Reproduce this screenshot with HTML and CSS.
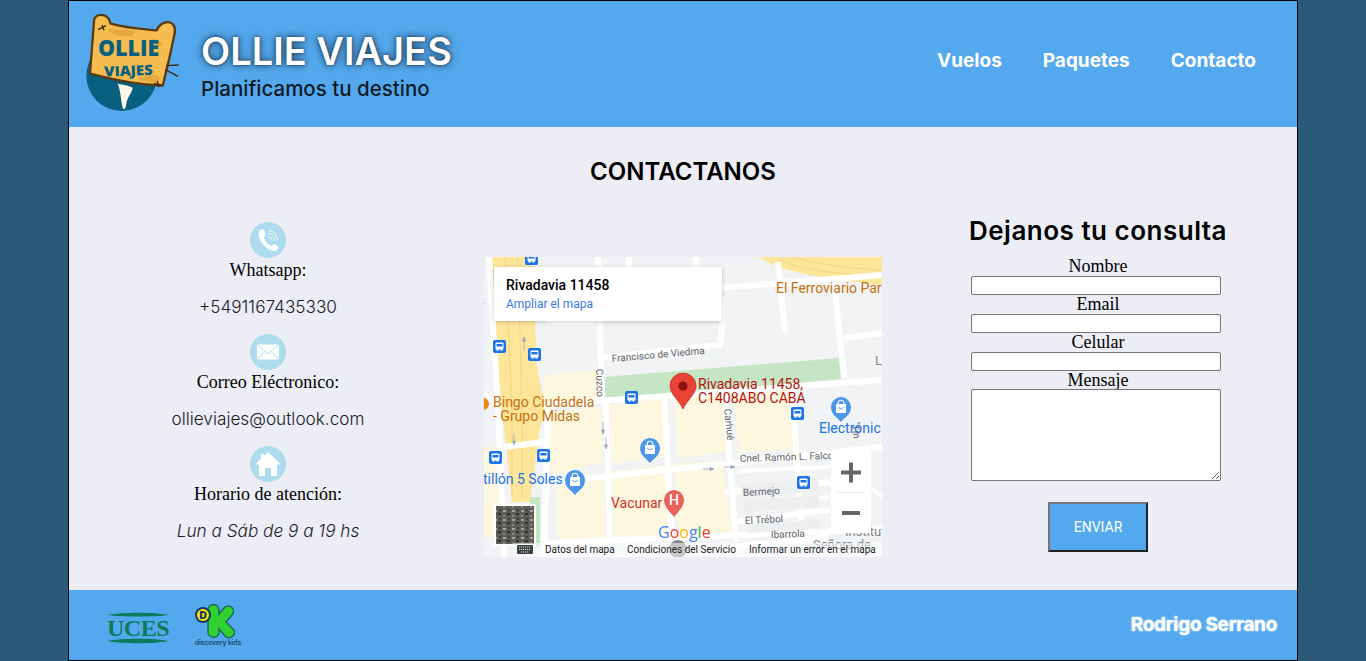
FILE: index.html
```html
<!DOCTYPE html>
<html lang="es">
<head>
<meta charset="utf-8">
<title>Ollie Viajes</title>
<link rel="stylesheet" href="styles.css">
</head>
<body>
<div class="page">
  <header class="top">
    <div class="brand">
      <svg class="logo" viewBox="0 0 330 345" aria-hidden="true">
        <circle cx="125" cy="212" r="106" fill="#07607f"/>
        <path d="M42 48C40 26 84 18 92 56C140 70 190 72 230 76C245 40 292 44 284 85L268 160L248 242C180 240 90 222 30 206L42 48Z" fill="#f6bc50" stroke="#5a3a12" stroke-width="7" stroke-linejoin="round"/>
        <path d="M80 70c30 8 60 0 85 10l-10 14c-30 0-60 0-75-24zM175 225c20-18 45-20 65-10l-5 22zM215 100c15 0 25 10 35 20l-20 6z" fill="#e5a73f"/>
        <path d="M113 236C125 238 148 242 158 248C156 264 145 272 140 290C138 302 138 312 130 312C122 295 124 262 113 236Z" fill="#fdf6e6"/>
        <path d="M258 182L296 180M256 194L294 214M54 74L78 62M66 60L72 76M222 236L244 240M232 228L236 246" stroke="#3d2a10" stroke-width="4" fill="none"/>
        <text class="logo-big" x="146" y="152" text-anchor="middle" textLength="184" lengthAdjust="spacingAndGlyphs">OLLIE</text>
        <text class="logo-small" x="146" y="212" text-anchor="middle" textLength="146" lengthAdjust="spacingAndGlyphs" transform="rotate(-2 146 212)">VIAJES</text>
      </svg>
      <div class="brand-text">
        <div class="brand-name">OLLIE VIAJES</div>
        <div class="brand-sub">Planificamos tu destino</div>
      </div>
    </div>
    <nav class="nav">
      <a class="nav-link">Vuelos</a>
      <a class="nav-link">Paquetes</a>
      <a class="nav-link">Contacto</a>
    </nav>
  </header>

  <main class="content">
    <h1 class="title">CONTACTANOS</h1>
    <div class="columns">
      <section class="info">
        <svg class="info-icon" viewBox="0 0 36 36" aria-hidden="true">
          <circle cx="18" cy="18" r="18" fill="#aedcef"/>
          <path d="M9 9.5C10.5 7.5 13 7 14 8L15.8 12C16 13 14.5 14 14 15C14 18 18 23 21.5 24C23 23.5 23.5 22.2 24.6 22.2L28 24.5C29 26 27 28.5 24.5 29C17 29 7 18 9 9.5Z" fill="#fff"/>
          <path d="M18 8.5C23 8.5 27.5 13 27.5 18.5M18 11.5C21.5 11.5 24.7 14.5 24.7 18.5M18 14.5C20 14.5 22 16.2 22 18.5" stroke="#fff" stroke-width=".9" fill="none"/>
        </svg>
        <p class="info-label">Whatsapp:</p>
        <p class="info-value">+5491167435330</p>
        <svg class="info-icon" viewBox="0 0 36 36" aria-hidden="true">
          <circle cx="18" cy="18" r="18" fill="#aedcef"/>
          <path d="M7 10.5H29V25.5H7Z" fill="#fff"/>
          <path d="M7 10.5L18 20L29 10.5M7 25.5L15 17.5M29 25.5L21 17.5" stroke="#aedcef" stroke-width="1" fill="none"/>
        </svg>
        <p class="info-label">Correo Eléctronico:</p>
        <p class="info-value">ollieviajes@outlook.com</p>
        <svg class="info-icon" viewBox="0 0 36 36" aria-hidden="true">
          <circle cx="18" cy="18" r="18" fill="#aedcef"/>
          <path d="M18 6L31 18.5H27V30H21V22H15V30H9V18.5H5L11 12.8V8H14V10Z" fill="#fff"/>
        </svg>
        <p class="info-label">Horario de atención:</p>
        <p class="info-value info-hours">Lun a Sáb de 9 a 19 hs</p>
      </section>

      <section class="map-col">
        <svg class="map" viewBox="0 0 398 300" role="img" aria-label="Mapa de Rivadavia 11458">
          <defs>
            <pattern id="sat" width="9" height="9" patternUnits="userSpaceOnUse">
              <rect width="9" height="9" fill="#5c5e56"/>
              <rect x="1" y="1" width="3" height="2" fill="#a5a69e"/>
              <rect x="5" y="4" width="3" height="2" fill="#2e302c"/>
              <rect x="1" y="6" width="2" height="2" fill="#8a8c82"/>
              <rect x="6" y="0" width="2" height="2" fill="#3b3d38"/>
            </pattern>
            <g id="bus">
              <rect width="13" height="13" rx="2" fill="#1a73e8"/>
              <rect x="2.5" y="2.5" width="8" height="7" rx="1" fill="#fff"/>
              <rect x="3.500" y="4" width="6" height="2.500" fill="#1a73e8"/>
              <rect x="3.5" y="9" width="2" height="1.6" fill="#fff"/>
              <rect x="7.5" y="9" width="2" height="1.6" fill="#fff"/>
            </g>
            <g id="shop">
              <path d="M0 0C-3-4-10-7-10-15A10 10 0 0 1 10-15C10-7 3-4 0 0Z" fill="#4e96ec"/>
              <rect x="-5" y="-18" width="10" height="9" rx="1" fill="#fff"/>
              <path d="M-3-18C-3-23 3-23 3-18" stroke="#fff" stroke-width="1.2" fill="none"/>
              <path d="M-2.500-15C-1.500-12.500 1.500-12.500 2.500-15" stroke="#4e96ec" stroke-width="1" fill="none"/>
            </g>
          </defs>
          <rect width="398" height="300" fill="#f1f3f4"/>
          <path class="cream" d="M60 118L118 112L118 146L60 150ZM62 155L116 150L120 205L68 218ZM125 148L178 142L186 200L128 207ZM190 141L238 136L246 195L194 201ZM248 134L304 130L312 192L255 195ZM72 228L120 222L122 280L74 283ZM128 214L182 208L188 279L130 280ZM190 207L238 203L248 275L195 278ZM0 190L18 190L22 280L0 280Z"/>
          <path class="grass" d="M120 120L356 101L358 122L122 143Z"/>
          <path class="grass" d="M46 240H56V290H46Z"/>
          <path class="highway" d="M8 0H48L53 110L62 155L56 170L46 245H28L20 170L14 150Z"/>
          <path class="highway" d="M275 0C300 18 350 22 398 28V0Z"/>
          <path class="hw-line" d="M21 0L28 150V240M34 0L38 150V240M290 0C315 14 360 17 398 20M310 0C335 8 365 11 398 13"/>
          <g class="road">
            <path d="M60 148L397 123"/>
            <path d="M116 101L236 88C238 80 238 70 238 40M236 31L398 18M294 5L301 75M350 25L360 121M360 81L400 76"/>
            <path d="M114 0L118 145M64 148L60 300M122 146L126 285M180 140L188 285M240 132L252 285M308 128L318 285M212 0V30M145 0V55M62 64H112"/>
            <path d="M67 225L346 196L398 190M60 286L398 272M240 235L346 225M250 265L346 253M250 290L346 280M20 190L60 185M5 0L14 150L20 300"/>
          </g>
          <g class="road-thin"><path d="M346 196L398 240M255 214L346 210M258 250L346 240M0 135L14 150"/></g>
          <g class="grey-block"><path d="M256 228L334 221L336 234L258 240ZM258 244L335 238L336 250L260 255ZM262 268L336 262L338 272L264 276Z"/></g>
          <path class="arrows" d="M40 84v9M38.500 84l1.500-4 1.500 4zM113 33v9M111.500 42l1.500 4 1.500-4zM118 52v8M116.500 60l1.500 4 1.500-4zM30 176v8M28.500 184l1.500 4 1.500-4zM119 165v8M117.500 173l1.500 4 1.500-4zM122 180v8M120.500 188l1.500 4 1.500-4zM20 270v8M240 210h7M247 208.500l4 1.500-4 1.500zM219 212h7M226 210.500l4 1.500-4 1.500z"/>

          <use href="#bus" x="41" y="-5"/>
          <use href="#bus" x="9" y="83"/>
          <use href="#bus" x="44" y="91"/>
          <use href="#bus" x="141" y="134"/>
          <use href="#bus" x="5" y="194"/>
          <use href="#bus" x="53" y="192"/>
          <use href="#bus" x="307" y="150"/>
          <use href="#bus" x="313" y="219"/>
          <use href="#shop" x="166" y="206"/>
          <use href="#shop" x="91" y="238"/>
          <use href="#shop" x="357" y="165"/>
          <circle cx="-1" cy="147" r="6" fill="#e8890c"/>

          <text class="street" transform="translate(128 105) rotate(-5)">Francisco de Viedma</text>
          <text class="street" transform="translate(112 112) rotate(88)">Cuzco</text>
          <text class="street" transform="translate(240 152) rotate(84)">Carhué</text>
          <text class="street" transform="translate(368 168) rotate(84)">Tin</text>
          <text class="street" x="256" y="205" transform="rotate(-2 256 205)">Cnel. Ramón L. Falco</text>
          <text class="street" x="259" y="239" transform="rotate(-3 259 239)">Bermejo</text>
          <text class="street" x="261" y="267" transform="rotate(-3 261 267)">El Trébol</text>
          <text class="street" x="287" y="281" transform="rotate(-2 287 281)">Ibarrola</text>
          <text class="street-big" x="361" y="279">Instituto</text>
          <text class="street-big" x="329" y="292">Señora de</text>
          <text class="street-big" x="391" y="108">L</text>
          <text class="street-big" x="-7" y="49">S</text>

          <text class="poi orange" x="292" y="36">El Ferroviario Par</text>
          <text class="poi orange" x="9" y="150">Bingo Ciudadela</text>
          <text class="poi orange" x="9" y="164">- Grupo Midas</text>
          <text class="poi blue" x="335" y="176">Electrónic</text>
          <text class="poi blue" x="-1" y="227">tillón 5 Soles</text>
          <text class="poi red" x="127" y="251">Vacunar</text>
          <text class="poi dark-red" x="214" y="132">Rivadavia 11458,</text>
          <text class="poi dark-red" x="214" y="146">C1408ABO CABA</text>

          <path d="M190 260C187 256 180 250 180 243A10 10 0 0 1 200 243C200 250 193 256 190 260Z" fill="#e8615a"/>
          <text class="h-mark" x="190" y="248" text-anchor="middle">H</text>
          <path d="M199 152C195 143 186 137 186 129A13 13 0 0 1 212 129C212 137 203 143 199 152Z" fill="#ea4335" stroke="#c5221f" stroke-width=".7"/>
          <circle cx="199" cy="129" r="4.6" fill="#8a1210"/>

          <text class="google" x="174" y="281"><tspan fill="#4285f4">G</tspan><tspan fill="#ea4335">o</tspan><tspan fill="#fbbc05">o</tspan><tspan fill="#4285f4">g</tspan><tspan fill="#34a853">l</tspan><tspan fill="#ea4335">e</tspan></text>
          <circle cx="194" cy="292" r="9" fill="#80868b"/>

          <g class="popup">
            <rect class="popup-box" x="10" y="10" width="228" height="54"/>
            <text class="popup-title" x="22" y="33">Rivadavia 11458</text>
            <text class="popup-link" x="22" y="51">Ampliar el mapa</text>
          </g>

          <rect x="10" y="247" width="42" height="42" fill="#fff"/>
          <rect x="12" y="249" width="38" height="38" fill="url(#sat)"/>

          <rect x="347" y="195" width="40" height="81" rx="1" fill="#fff"/>
          <path d="M357 215.500H377M367 205.500V225.500" stroke="#666" stroke-width="4"/>
          <path d="M353 235.500H381" stroke="#e6e6e6"/>
          <path d="M358 256H376" stroke="#666" stroke-width="4"/>

          <rect x="30" y="286" width="368" height="14" fill="#fff" fill-opacity=".55"/>
          <rect x="33" y="288" width="16" height="9" rx="1" fill="#3c4043"/>
          <path d="M35 290h12M35 292.500h12M37 295h8" stroke="#fff" stroke-width=".8" stroke-dasharray="1.200 .8"/>
          <text class="map-foot" x="61" y="296">Datos del mapa</text>
          <text class="map-foot" x="143" y="296">Condiciones del Servicio</text>
          <text class="map-foot" x="265" y="296">Informar un error en el mapa</text>
        </svg>
      </section>

      <section class="form-col">
        <h2 class="form-title">Dejanos tu consulta</h2>
        <form class="form">
          <label class="form-label">Nombre</label>
          <input class="form-input" type="text">
          <label class="form-label">Email</label>
          <input class="form-input" type="text">
          <label class="form-label">Celular</label>
          <input class="form-input" type="text">
          <label class="form-label">Mensaje</label>
          <textarea class="form-area"></textarea>
          <button class="form-send" type="button">ENVIAR</button>
        </form>
      </section>
    </div>
  </main>

  <footer class="bottom">
    <div class="sponsors">
      <svg class="uces" viewBox="0 0 68 36" aria-hidden="true">
        <path d="M3 5C18 2 50 2 65 5C50 7 18 7 3 5ZM3 31C18 28 50 28 65 31C50 34 18 34 3 31Z" fill="#0e7a5c"/>
        <text class="uces-text" x="34" y="26" text-anchor="middle">UCES</text>
      </svg>
      <svg class="dk" viewBox="0 0 52 44" aria-hidden="true">
        <path d="M15 7L15 29C15 36 26 36 26 29L26 26L32 33C37 38 45 31 40 26L33 19L39 12C44 6 36 0 31 5L26 11L26 7C26 0 15 0 15 7Z" fill="#2fd02f" stroke="#1a6a55" stroke-width="1.400"/>
        <circle cx="10" cy="12" r="8" fill="#173a6b"/>
        <circle cx="10" cy="12" r="6" fill="#ffe600"/>
        <text class="dk-d" x="10" y="16" text-anchor="middle">D</text>
        <text class="dk-text" x="25" y="42" text-anchor="middle">discovery kids</text>
      </svg>
    </div>
    <div class="author">Rodrigo Serrano</div>
  </footer>
</div>
</body>
</html>
```

FILE: styles.css
```css
* { box-sizing: border-box; }
html, body { margin: 0; height: 100%; overflow: hidden; }
body { background: #2a5a78; color: #000; font-family: "Liberation Serif", serif; }

.page {
  width: 1230px;
  height: 661px;
  margin: 0 auto;
  border: 1px solid #000;
  display: flex;
  flex-direction: column;
  background: #ecedf5;
}

.top {
  height: 126px;
  flex: none;
  background: #54a9ee;
  display: flex;
  align-items: center;
  justify-content: space-between;
  padding: 0 41px 4px 11px;
}
.brand { display: flex; align-items: center; gap: 11px; }
.logo { width: 110px; height: 115px; display: block; }
.logo-big { font: 800 68px "Open Sans", sans-serif; fill: #07607f; }
.logo-small { font: 800 42px "Open Sans", sans-serif; fill: #07607f; }
.brand-text { display: flex; flex-direction: column; margin-top: 6px; }
.brand-name {
  font: 600 38px/44px Inter, sans-serif;
  color: #fff;
  text-shadow: 0 0 8px #1c3a55, 0 0 3px #1c3a55;
}
.brand-sub { margin-top: 4px; font: 500 20.500px/24px Inter, sans-serif; color: #0c1a26; }
.nav { display: flex; gap: 41px; margin-bottom: 2px; }
.nav-link { font: 700 19px/24px Inter, sans-serif; color: #fff; }

.content { flex: 1; padding-top: 30px; min-height: 0; }
.title {
  margin: 0;
  text-align: center;
  font: 600 24px/30px Inter, sans-serif;
}
.columns {
  display: grid;
  grid-template-columns: 398px 1fr 398px;
  margin-top: 20px;
}

.info { display: flex; flex-direction: column; align-items: center; padding-top: 15px; }
.info-icon { width: 36px; height: 36px; display: block; }
.info-label { margin: 1px 0 0; font-size: 18px; line-height: 22px; }
.info-value {
  margin: 15px 0 16px;
  font: 300 17.200px/22px Inter, sans-serif;
  color: #1b1b2a;
}
.info-hours { font-style: italic; }

.map-col { display: flex; justify-content: center; padding-top: 50px; }
.map { width: 398px; height: 300px; display: block; }
.cream { fill: #fef7e0; }
.grass { fill: #c4e6c4; }
.highway { fill: #fde59a; }
.hw-line { stroke: #f7d57e; fill: none; stroke-width: 1; }
.road { fill: none; stroke: #fff; stroke-width: 6; }
.road-thin { fill: none; stroke: #fff; stroke-width: 4; }
.grey-block { fill: #eceef0; }
.arrows { fill: #9aa5c4; stroke: #9aa5c4; stroke-width: .8; }
.street { font: 400 10px Roboto, sans-serif; fill: #5f6368; }
.street-big { font: 400 13px Roboto, sans-serif; fill: #80868b; }
.poi { font: 400 14px Roboto, sans-serif; }
.orange { fill: #c5710f; }
.blue { fill: #1a73e8; }
.red { fill: #d93025; }
.dark-red { fill: #b3140e; }
.h-mark { font: 500 14px Roboto, sans-serif; fill: #fff; }
.google { font: 500 16px "Open Sans", sans-serif; }
.popup-box { fill: #fff; filter: drop-shadow(0 1px 2px rgba(60, 64, 67, .3)); }
.popup-title { font: 500 14px Roboto, sans-serif; fill: #000; }
.popup-link { font: 400 12px Roboto, sans-serif; fill: #3b78e7; }
.map-foot { font: 400 10px Roboto, sans-serif; fill: #202124; }

.form-col { display: flex; flex-direction: column; align-items: center; padding-top: 7px; }
.form-title {
  margin: 0;
  font: 600 26px/34px Inter, sans-serif;
  letter-spacing: .5px;
}
.form { display: flex; flex-direction: column; align-items: center; margin-top: 9px; }
.form-label { font-size: 18px; line-height: 19px; display: block; }
.form-input {
  width: 250px;
  height: 19px;
  display: block;
  margin: 0 4px 0 0;
  padding: 1px 2px;
  border: 1px solid #767676;
  border-radius: 2px;
  background: #fff;
}
.form-area {
  width: 250px;
  height: 92px;
  display: block;
  margin: -1px 4px 0 0;
  padding: 2px;
  border: 1px solid #767676;
  border-radius: 2px;
  background: #fff;
  resize: vertical;
}
.form-send {
  width: 100px;
  height: 50px;
  margin-top: 21px;
  background: #54a9ee;
  color: #fff;
  border: 2px outset #767676;
  font: 400 14px Roboto, sans-serif;
}

.bottom {
  height: 70px;
  flex: none;
  background: #54a9ee;
  display: flex;
  align-items: center;
  justify-content: space-between;
  padding: 0 20px 0 35px;
}
.sponsors { display: flex; align-items: center; gap: 21px; }
.uces { width: 68px; height: 36px; display: block; margin-top: 6px; }
.uces-text { font: 700 24px "Liberation Serif", serif; fill: #0e7a5c; letter-spacing: -.5px; }
.dk { width: 52px; height: 44px; display: block; }
.dk-d { font: 800 11px "Open Sans", sans-serif; fill: #173a6b; }
.dk-text { font: 600 7px Inter, sans-serif; fill: #1c4a6b; letter-spacing: -.2px; }
.author { font: 700 19px/24px Inter, sans-serif; color: #fff; letter-spacing: -.3px; text-shadow: 0 0 2px #fff; }
```
